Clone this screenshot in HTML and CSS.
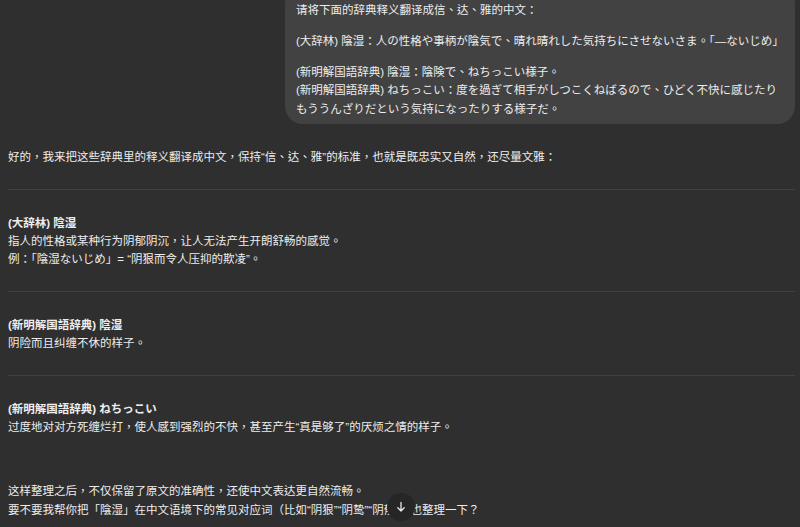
FILE: index.html
```html
<!DOCTYPE html>
<html lang="zh-CN">
<head>
<meta charset="utf-8">
<title>辞典释义翻译</title>
<link rel="stylesheet" href="styles.css">
</head>
<body>
<div class="thread">
  <div class="user-row">
    <div class="bubble">
      <p>请将下面的辞典释义翻译成信、达、雅的中文：</p>
      <p lang="ja">(大辞林) 陰湿：人の性格や事柄が陰気で、晴れ晴れした気持ちにさせないさま。「—ないじめ」</p>
      <p lang="ja">(新明解国語辞典) 陰湿：陰険で、ねちっこい様子。<br>(新明解国語辞典) ねちっこい：度を過ぎて相手がしつこくねばるので、ひどく不快に感じたりもううんざりだという気持になったりする様子だ。</p>
    </div>
  </div>

  <div class="answer">
    <p>好的，我来把这些辞典里的释义翻译成中文，保持“信、达、雅”的标准，也就是既忠实又自然，还尽量文雅：</p>
    <hr>
    <div class="entry">
      <div class="term">(大辞林) 陰湿</div>
      <div>指人的性格或某种行为阴郁阴沉，让人无法产生开朗舒畅的感觉。</div>
      <div>例：「陰湿ないじめ」= “阴狠而令人压抑的欺凌”。</div>
    </div>
    <hr>
    <div class="entry">
      <div class="term">(新明解国語辞典) 陰湿</div>
      <div>阴险而且纠缠不休的样子。</div>
    </div>
    <hr>
    <div class="entry">
      <div class="term">(新明解国語辞典) ねちっこい</div>
      <div>过度地对对方死缠烂打，使人感到强烈的不快，甚至产生“真是够了”的厌烦之情的样子。</div>
    </div>
    <div class="outro">
      <div>这样整理之后，不仅保留了原文的准确性，还使中文表达更自然流畅。</div>
      <div>要不要我帮你把「陰湿」在中文语境下的常见对应词（比如“阴狠”“阴鸷”“阴郁”）也整理一下？</div>
    </div>
  </div>
</div>
<button class="scroll-down" aria-label="scroll down">
  <svg width="12" height="12" viewBox="0 0 12 12"><path d="M6 1.5v8.5M2.8 6.8L6 10l3.2-3.2" fill="none" stroke="#e8e8e8" stroke-width="1.3" stroke-linecap="round" stroke-linejoin="round"/></svg>
</button>
</body>
</html>
```

FILE: styles.css
```css
*
{
	box-sizing: border-box;
}
html, body
{
	height: 100%;
}
body
{
	margin: 0;
	padding: 0;
	background: #2f2f2f;
	color: #ededed;
	font-family: "Liberation Sans", "Noto Sans CJK TC", sans-serif;
	font-feature-settings: "locl" 0;
	font-size: 11.5px;
	line-height: 18.4px;
	overflow: hidden;
}
p{
	margin: 0;
}
.thread{
	padding: 0 5px 0 8px;
}
.user-row{
	display: flex;
	justify-content: flex-end;
}
.bubble{
	width: 510px;
	margin-top: -14px;
	padding: 15px 11px 6px 11px;
	background: #424242;
	border-radius: 18px;
}
.bubble p + p{
	margin-top: 12.6px;
}
.answer{
	padding-top: 24px;
}
hr{
	border: 0;
	border-top: 1px solid #414141;
	margin: 22px 0 24px 0;
}
.term{
	font-weight: 700;
}
.outro{
	margin-top: 46px;
}
.scroll-down{
	position: fixed;
	left: 387px;
	top: 493px;
	width: 28px;
	height: 28px;
	border-radius: 50%;
	border: 0;
	background: #262626;
	display: flex;
	align-items: center;
	justify-content: center;
	padding: 0;
}
```
